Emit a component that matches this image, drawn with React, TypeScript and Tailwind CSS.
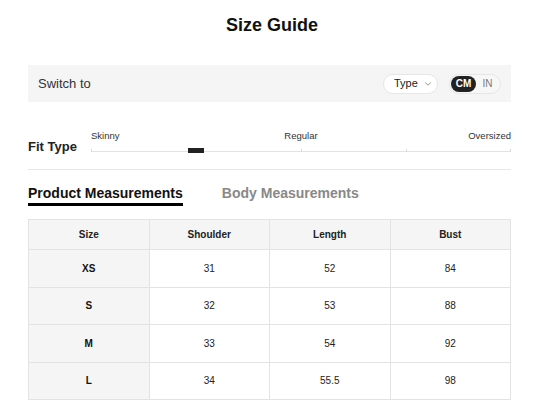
import { ChevronDown } from "lucide-react";

const rows = [
  { size: "XS", shoulder: "31", length: "52", bust: "84" },
  { size: "S", shoulder: "32", length: "53", bust: "88" },
  { size: "M", shoulder: "33", length: "54", bust: "92" },
  { size: "L", shoulder: "34", length: "55.5", bust: "98" },
];

export default function App(): JSX.Element {
  return (
    <main className="h-[409px] w-[534px] overflow-hidden bg-white font-['Liberation_Sans',Arial,sans-serif] text-[#222]">
      <h1 className="flex h-[50px] items-center justify-center pl-[10px] text-[18px] font-bold text-[#111]">
        Size Guide
      </h1>

      <div className="ml-[28px] mt-[15px] w-[483px]">
        {/* unit switch */}
        <div className="flex h-[37px] items-center justify-between bg-[#f5f5f5] pl-[10px] pr-[10px]">
          <span className="text-[13px] text-[#333]">Switch to</span>
          <div className="flex items-center gap-[11px]">
            <button
              type="button"
              className="flex h-[20px] w-[55px] items-center gap-[5px] rounded-full border border-[#e6e6e6] bg-white pl-[10px] text-[11px] text-[#222]"
            >
              Type
              <ChevronDown size={10} strokeWidth={1.5} className="text-[#555]" />
            </button>
            <div className="flex h-[20px] w-[52px] items-center rounded-full border border-[#e6e6e6] bg-[#f7f7f7] p-px">
              <span className="flex h-full w-[25px] items-center justify-center rounded-full bg-[#222] text-[10px] font-bold text-white">
                CM
              </span>
              <span className="flex-1 text-center text-[10px] text-[#777]">IN</span>
            </div>
          </div>
        </div>

        {/* fit type */}
        <div className="mt-[28px] flex items-start border-b border-[#e8e8e8] pb-[12px]">
          <span className="mt-[7px] w-[63px] text-[13px] font-bold leading-[20px] text-[#222]">
            Fit Type
          </span>
          <div className="flex-1">
            <div className="relative h-[12px] text-[9.5px] leading-[12px] text-[#333]">
              <span className="absolute left-0">Skinny</span>
              <span className="absolute left-1/2 -translate-x-1/2">Regular</span>
              <span className="absolute right-0">Oversized</span>
            </div>
            <div className="relative h-[10px]">
              <div className="absolute left-0 right-0 top-[9px] h-px bg-[#e3e3e3]" />
              <div className="absolute left-0 top-[7px] h-[3px] w-px bg-[#d8d8d8]" />
              <div className="absolute left-1/2 top-[7px] h-[3px] w-px bg-[#d8d8d8]" />
              <div className="absolute left-3/4 top-[7px] h-[3px] w-px bg-[#d8d8d8]" />
              <div className="absolute right-0 top-[7px] h-[3px] w-px bg-[#d8d8d8]" />
              <div className="absolute left-1/4 top-[6px] h-[5px] w-[16px] -translate-x-1/2 bg-[#222]" />
            </div>
          </div>
        </div>

        {/* tabs */}
        <div className="flex gap-[39px] pt-[13px]">
          <span className="h-[23px] border-b-[3px] border-black text-[14px] font-bold leading-[20px] text-[#111]">
            Product Measurements
          </span>
          <span className="h-[20px] text-[14px] font-bold leading-[20px] text-[#888]">
            Body Measurements
          </span>
        </div>

        {/* table */}
        <table className="mt-[13px] w-full table-fixed border-collapse text-center text-[10px]">
          <thead>
            <tr className="h-[30px] bg-[#f5f5f5]">
              <th className="border border-[#e3e3e3] font-bold">Size</th>
              <th className="border border-[#e3e3e3] font-bold">Shoulder</th>
              <th className="border border-[#e3e3e3] font-bold">Length</th>
              <th className="border border-[#e3e3e3] font-bold">Bust</th>
            </tr>
          </thead>
          <tbody>
            {rows.map((r) => (
              <tr key={r.size} className="h-[37.5px]">
                <td className="border border-[#e3e3e3] bg-[#f5f5f5] font-bold text-[#111]">{r.size}</td>
                <td className="border border-[#e3e3e3]">{r.shoulder}</td>
                <td className="border border-[#e3e3e3]">{r.length}</td>
                <td className="border border-[#e3e3e3]">{r.bust}</td>
              </tr>
            ))}
          </tbody>
        </table>
      </div>
    </main>
  );
}
